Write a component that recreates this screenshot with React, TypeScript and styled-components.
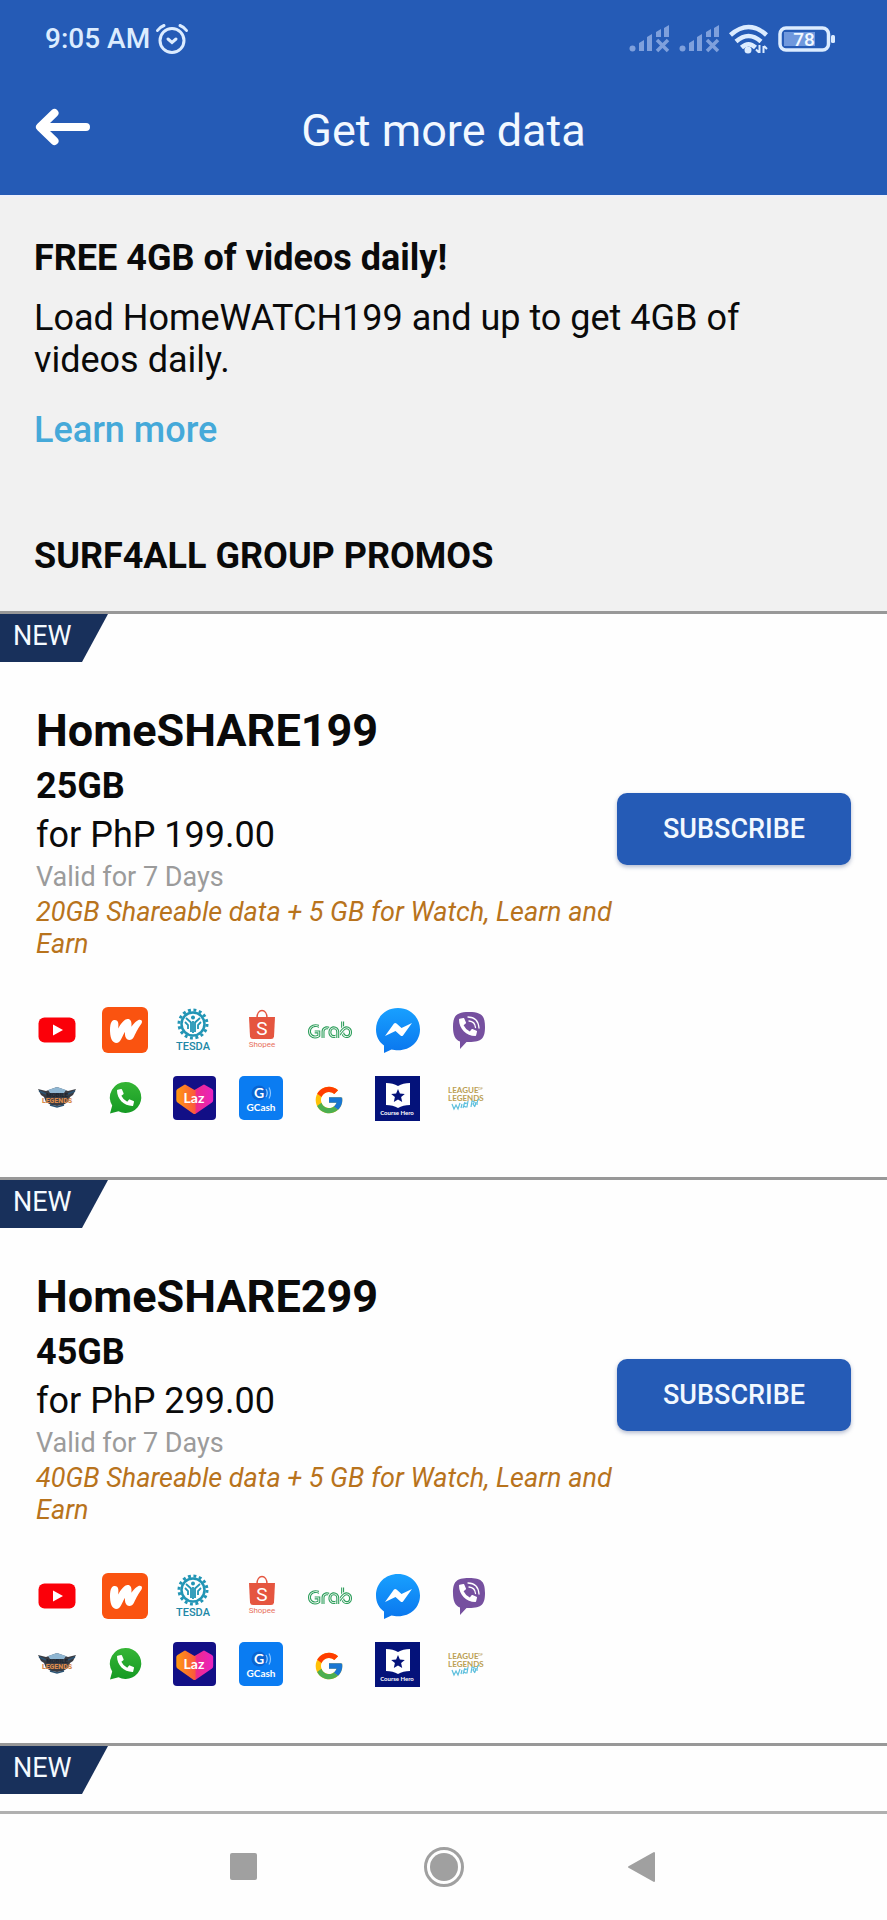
import React from 'react';
import styled, { createGlobalStyle } from 'styled-components';
import { SiWattpad, SiGrab } from 'react-icons/si';
import { FaPhoneAlt } from 'react-icons/fa';
import { FcGoogle } from 'react-icons/fc';

const GlobalStyle = createGlobalStyle`
  * { box-sizing: border-box; }
  html, body, #root { height: 100%; }
  body {
    margin: 0;
    background: #fefefe;
    color: #0a0a0a;
    font-family: Roboto, "Liberation Sans", sans-serif;
  }
`;

const Screen = styled.div`
  display: flex;
  flex-direction: column;
  height: 100vh;
  overflow: hidden;
`;

const TopBar = styled.header`
  flex: none;
  height: 195px;
  background: #255bb6;
  color: #f2f8ff;
`;

const StatusBar = styled.div`
  display: flex;
  align-items: center;
  justify-content: space-between;
  height: 78px;
  padding: 0 52px 0 45px;
`;

const StatusGroup = styled.div<{ $gap: number }>`
  display: flex;
  align-items: center;
  gap: ${(p) => p.$gap}px;
  color: #dcecff;
`;

const Clock = styled.span`
  font-size: 28px;
  line-height: 32px;
  font-weight: 500;
`;

const TitleRow = styled.div`
  display: grid;
  grid-template-columns: 56px 1fr 56px;
  align-items: center;
  height: 106px;
  padding: 0 35px;
`;

const BackButton = styled.button`
  display: flex;
  padding: 0 0 8px;
  border: 0;
  background: none;
  cursor: pointer;
`;

const Title = styled.h1`
  margin: 0;
  font-size: 45px;
  line-height: 54px;
  font-weight: 400;
  text-align: center;
`;

const Content = styled.main`
  flex: 1;
  min-height: 0;
  overflow: hidden;
`;

const Intro = styled.section`
  padding: 40px 34px 34px;
  border-top: 2px solid #eef0fb;
  background: #f1f1f1;
`;

const SectionHeading = styled.h2`
  margin: 0;
  font-size: 36px;
  line-height: 42px;
  font-weight: 700;
`;

const IntroText = styled.p`
  max-width: 740px;
  margin: 18px 0 28px;
  font-size: 36px;
  line-height: 42px;
`;

const LearnMore = styled.a`
  display: block;
  margin-bottom: 84px;
  font-size: 36px;
  line-height: 42px;
  font-weight: 500;
  color: #45a9d9;
  text-decoration: none;
`;

const Card = styled.article`
  height: 566px;
  border-top: 3px solid #989898;
  background: #fefefe;
`;

const Ribbon = styled.div`
  width: 108px;
  height: 48px;
  padding: 6px 13px;
  background: #18305b;
  clip-path: polygon(0 0, 100% 0, 82px 100%, 0 100%);
  color: #f4faff;
  font-size: 27px;
  line-height: 32px;
`;

const Offer = styled.div`
  display: flex;
  align-items: flex-start;
  justify-content: space-between;
  padding: 42px 36px 0;
`;

const Details = styled.div`
  flex: 0 1 580px;
`;

const PlanName = styled.h3`
  margin: 0;
  font-size: 45px;
  line-height: 54px;
  font-weight: 700;
`;

const PlanSize = styled.p`
  margin: 2px 0 0;
  font-size: 36px;
  line-height: 52px;
  font-weight: 700;
`;

const PlanPrice = styled.p`
  margin: 0;
  font-size: 36px;
  line-height: 46px;
`;

const PlanValidity = styled.p`
  margin: 0;
  font-size: 27px;
  line-height: 38px;
  color: #9b9b9b;
`;

const PlanNote = styled.p`
  margin: 0;
  font-size: 27px;
  line-height: 32px;
  font-style: italic;
  color: #b8731c;
`;

const SubscribeButton = styled.button`
  flex: none;
  width: 234px;
  height: 72px;
  margin-top: 89px;
  border: 0;
  border-radius: 10px;
  background: #255bb6;
  box-shadow: 0 2px 4px rgba(37, 60, 120, 0.35);
  color: #f2f8ff;
  font: 500 27px/32px Roboto, "Liberation Sans", sans-serif;
  cursor: pointer;
`;

const AppGrid = styled.ul`
  display: grid;
  grid-template-columns: repeat(7, 68px);
  grid-auto-rows: 68px;
  margin: 0;
  padding: 36px 0 0 23px;
  list-style: none;
`;

const AppCell = styled.li`
  display: flex;
  align-items: center;
  justify-content: center;
`;

const NavBar = styled.nav`
  flex: none;
  display: flex;
  align-items: center;
  justify-content: center;
  gap: 136px;
  height: 109px;
  border-top: 3px solid #b0b0b0;
  background: #fefefe;
`;

const NavButton = styled.button`
  display: flex;
  padding: 0;
  border: 0;
  background: none;
  cursor: pointer;
`;

const AlarmIcon = () => (
  <svg width="34" height="32" viewBox="0 0 34 32" fill="none" stroke="currentColor" strokeWidth="3" strokeLinecap="round">
    <circle cx="17" cy="17.500" r="12" />
    <path d="M13 16l4 3.500 4-3.500" />
    <path d="M2.500 7.500Q5 4 9 2.500M31.500 7.500Q29 4 25 2.500" />
  </svg>
);

const SignalIcon = () => (
  <svg width="41" height="28" viewBox="0 0 41 28" fill="#7fa0dc">
    <circle cx="3.500" cy="23.500" r="3" />
    <path d="M10 18l5-3v11h-5zM18 12l5-3v17h-5zM27 7l5-3v8h-5zM35 3l5-3v12h-5z" />
    <path d="M28 15l11 11M39 15l-11 11" stroke="#7fa0dc" strokeWidth="3.500" />
  </svg>
);

const WifiIcon = () => (
  <svg width="40" height="30" viewBox="0 0 40 30" fill="none" stroke="currentColor" strokeWidth="4.500">
    <path d="M1.500 11Q19.500-5 37.500 11M7 17.500Q19.500 6.500 32 17.500M12.500 23.500Q19.500 17 26.500 23.500" />
    <circle cx="19" cy="26" r="3.500" fill="currentColor" stroke="none" />
    <path d="M30.500 21v8M30 28.500l-3-3M34.500 29v-7M35 22l3 3" strokeWidth="2" />
  </svg>
);

const BatteryIcon = () => (
  <svg width="57" height="26" viewBox="0 0 57 26">
    <rect x="2" y="2" width="48.500" height="22" rx="6" fill="none" stroke="currentColor" strokeWidth="3.500" />
    <rect x="6" y="6" width="31" height="14" fill="#6f98dd" />
    <rect x="53" y="9" width="4" height="8" rx="1.500" fill="currentColor" />
    <text x="26" y="20" textAnchor="middle" fontSize="19" fontWeight="500" fill="#f2f8ff">78</text>
  </svg>
);

const BackArrow = () => (
  <svg width="56" height="38" viewBox="0 0 56 38" fill="none" stroke="#fff" strokeWidth="8" strokeLinecap="round" strokeLinejoin="round">
    <path d="M51 19H6M19.500 5L5 19l14.500 14" />
  </svg>
);

type LogoProps = { label: string; children: React.ReactNode };

const Logo = ({ label, children }: LogoProps) => (
  <svg width="56" height="56" viewBox="0 0 56 56" role="img" aria-label={label}>
    {children}
  </svg>
);

const YouTubeLogo = () => (
  <Logo label="YouTube">
    <rect x="9.500" y="15.500" width="37" height="25" rx="6" fill="#fb0009" />
    <path d="M24 22.500v11l10-5.500z" fill="#fff" />
  </Logo>
);

const WattpadLogo = () => (
  <Logo label="Wattpad">
    <rect x="5" y="5" width="46" height="46" rx="6" fill="#fa5310" />
    <SiWattpad x={13} y={13} size={32} color="#fff" />
  </Logo>
);

const TesdaLogo = () => (
  <Logo label="TESDA">
    <g fill="none" stroke="#2295b5">
      <circle cx="28" cy="22" r="14" strokeWidth="3" strokeDasharray="2.900 2.600" />
      <circle cx="28" cy="22" r="11.500" strokeWidth="2.500" />
      <path d="M28 19v12M21 16l5 4.500v9.500M35 16l-5 4.500v9.500M20 20l3 3v4M36 20l-3 3v4" strokeWidth="1.800" />
    </g>
    <circle cx="28" cy="15.500" r="2" fill="#2295b5" />
    <text x="28" y="48" textAnchor="middle" fontSize="11" fontWeight="500" fill="#2187a6">TESDA</text>
  </Logo>
);

const ShopeeLogo = () => (
  <Logo label="Shopee">
    <path d="M24 16C24 6 34 6 34 16" fill="none" stroke="#e5553f" strokeWidth="1.500" />
    <path d="M16 15h26l-1 19.500q-.3 2.500-3 2.500H20q-2.700 0-3-2.500z" fill="#e5553f" />
    <text x="29" y="33" textAnchor="middle" fontSize="19" fill="#fff">S</text>
    <text x="29" y="45" textAnchor="middle" fontSize="8" fill="#e8715f">Shopee</text>
  </Logo>
);

const GrabLogo = () => (
  <Logo label="Grab">
    <SiGrab x={7} y={6} size={44} color="#2f9f5c" />
  </Logo>
);

const MessengerLogo = () => (
  <Logo label="Messenger">
    <defs>
      <linearGradient id="messenger-blue" x1="0" y1="0" x2="0" y2="1">
        <stop offset="0" stopColor="#18a0ff" />
        <stop offset="1" stopColor="#0a76ee" />
      </linearGradient>
    </defs>
    <path d="M29 6C16 6 7 15.500 7 27.500c0 7 3 12.500 8 16V51l7.500-3.500c2 .5 4 .8 6.500.8 13 0 22-9.300 22-20.800S42 6 29 6z" fill="url(#messenger-blue)" />
    <path d="M16 34l9-12.500q1.200-1 2.500 0l5 4.500 10.500-5-9 12.500q-1.200 1-2.500 0L26.500 29z" fill="#fff" />
  </Logo>
);

const ViberLogo = () => (
  <Logo label="Viber">
    <path d="M32 10c-13 0-16 4-16 15 0 8 2 12.500 7 14.500V47l6.500-7H32c13 0 16-4 16-15s-3-15-16-15z" fill="#76509f" />
    <FaPhoneAlt x={22} y={16} size={18} color="#fff" />
    <path d="M31 15q10 0 11 11M32 19q6 .5 6.500 6.500" fill="none" stroke="#fff" strokeWidth="1.300" strokeLinecap="round" />
  </Logo>
);

const MobileLegendsLogo = () => (
  <Logo label="Mobile Legends">
    <path d="M9 19l8 2 11-4 11 4 8-2-3 6-3 2-2 5-5 3-6 1-6-1-5-3-2-5-3-2z" fill="#3a3b42" />
    <path d="M19 20l9-3 9 3-2 3H21z" fill="#8fb6d2" />
    <path d="M10 21l7 3M46 21l-7 3M21 35l7 2 7-2" stroke="#2c5474" strokeWidth="1.500" fill="none" />
    <text x="28" y="27" textAnchor="middle" fontSize="6" fontWeight="900" fill="#1d2733">MOBILE</text>
    <text x="28" y="33" textAnchor="middle" fontSize="7" fontWeight="900" fill="#d98a4c">LEGENDS</text>
  </Logo>
);

const WhatsAppLogo = () => (
  <Logo label="WhatsApp">
    <defs>
      <linearGradient id="whatsapp-green" x1="0" y1="0" x2="0" y2="1">
        <stop offset="0" stopColor="#35b535" />
        <stop offset="1" stopColor="#159a24" />
      </linearGradient>
    </defs>
    <path d="M28.500 12a15.500 15.500 0 1 1-7 29.200L13 43.500l2.200-8A15.500 15.500 0 0 1 28.500 12z" fill="url(#whatsapp-green)" />
    <FaPhoneAlt x={20} y={19} size={17} color="#fff" />
  </Logo>
);

const LazadaLogo = () => (
  <Logo label="Lazada">
    <defs>
      <linearGradient id="lazada-heart" x1="0" y1="0" x2="1" y2="0">
        <stop offset="0" stopColor="#ff9a10" />
        <stop offset="0.500" stopColor="#fb5a3c" />
        <stop offset="0.550" stopColor="#ee2a8c" />
        <stop offset="1" stopColor="#e822c0" />
      </linearGradient>
    </defs>
    <rect x="8" y="6" width="43" height="44" rx="4" fill="#120f86" />
    <path d="M19 15q1-.8 2 0l8.500 5 8.500-5q1-.8 2 0l7 4q1.200.8 1.200 2v9q0 1.500-1.200 2.500L31 43.500q-1.500 1-3 0L12.500 32.500q-1.200-1-1.200-2.500v-9q0-1.200 1.200-2z" fill="url(#lazada-heart)" />
    <text x="29" y="33" textAnchor="middle" fontSize="14" fontWeight="700" fontFamily="Lato, sans-serif" fill="#fff">Laz</text>
  </Logo>
);

const GCashLogo = () => (
  <Logo label="GCash">
    <rect x="6" y="6" width="44" height="44" rx="5" fill="#0a7cf2" />
    <circle cx="26" cy="23" r="7.500" fill="#0c63cf" />
    <text x="26" y="28" textAnchor="middle" fontSize="14" fontWeight="700" fontFamily="Lato, sans-serif" fill="#fff">G</text>
    <path d="M33 19q2.500 4 0 8M36 17.500q3 5.500 0 11" fill="none" stroke="#8ec6ff" strokeWidth="1.200" />
    <text x="28" y="41" textAnchor="middle" fontSize="10" fontWeight="700" fontFamily="Lato, sans-serif" fill="#fff">GCash</text>
  </Logo>
);

const GoogleLogo = () => (
  <Logo label="Google">
    <FcGoogle x={12} y={14} size={32} />
  </Logo>
);

const CourseHeroLogo = () => (
  <Logo label="Course Hero">
    <rect x="6" y="6" width="45" height="45" fill="#04127a" />
    <path d="M17 13q7 0 12 3 5-3 12-3v22q-7 0-12 3-5-3-12-3z" fill="#fff" />
    <path d="M29 19l1.900 4.500 4.900.4-3.700 3.200 1.100 4.800-4.200-2.500-4.200 2.500 1.100-4.800-3.700-3.200 4.900-.4z" fill="#04127a" />
    <text x="28" y="45" textAnchor="middle" fontSize="6" fontWeight="700" fontFamily="Lato, sans-serif" fill="#fff">Course Hero</text>
  </Logo>
);

const WildRiftLogo = () => (
  <Logo label="League of Legends Wild Rift">
    <g fontFamily="Lato, sans-serif" fontSize="8" fontWeight="700" fill="#bb9f52">
      <text x="11" y="23">LEAGUE</text>
      <text x="11" y="31">LEGENDS</text>
    </g>
    <text x="41" y="20" fontSize="4" fill="#bb9f52">OF</text>
    <path d="M15 34l2 5 2-4 2 4 2-6M25 34l-1 4M28 32l-2 6M31 31l-1 6q-4 0-3-3l3-1M34 37l1-6q4 0 1 3l2 3M39 32l-1 4M43 29q-3 0-3 6" fill="none" stroke="#5cbfdd" strokeWidth="1.200" />
  </Logo>
);

const APPS = [
  YouTubeLogo, WattpadLogo, TesdaLogo, ShopeeLogo, GrabLogo, MessengerLogo, ViberLogo,
  MobileLegendsLogo, WhatsAppLogo, LazadaLogo, GCashLogo, GoogleLogo, CourseHeroLogo, WildRiftLogo,
];

type Plan = { name: string; size: string; price: string; validity: string; note: string };

const PLANS: Plan[] = [
  {
    name: 'HomeSHARE199',
    size: '25GB',
    price: 'for PhP 199.00',
    validity: 'Valid for 7 Days',
    note: '20GB Shareable data + 5 GB for Watch, Learn and Earn',
  },
  {
    name: 'HomeSHARE299',
    size: '45GB',
    price: 'for PhP 299.00',
    validity: 'Valid for 7 Days',
    note: '40GB Shareable data + 5 GB for Watch, Learn and Earn',
  },
];

const PlanCard = ({ plan }: { plan: Plan }) => (
  <Card>
    <Ribbon>NEW</Ribbon>
    <Offer>
      <Details>
        <PlanName>{plan.name}</PlanName>
        <PlanSize>{plan.size}</PlanSize>
        <PlanPrice>{plan.price}</PlanPrice>
        <PlanValidity>{plan.validity}</PlanValidity>
        <PlanNote>{plan.note}</PlanNote>
      </Details>
      <SubscribeButton type="button">SUBSCRIBE</SubscribeButton>
    </Offer>
    <AppGrid>
      {APPS.map((AppLogo, i) => (
        <AppCell key={i}>
          <AppLogo />
        </AppCell>
      ))}
    </AppGrid>
  </Card>
);

export default function App() {
  return (
    <Screen>
      <GlobalStyle />
      <TopBar>
        <StatusBar>
          <StatusGroup $gap={5}>
            <Clock>9:05 AM</Clock>
            <AlarmIcon />
          </StatusGroup>
          <StatusGroup $gap={9}>
            <SignalIcon />
            <SignalIcon />
            <WifiIcon />
            <BatteryIcon />
          </StatusGroup>
        </StatusBar>
        <TitleRow>
          <BackButton type="button" aria-label="Back">
            <BackArrow />
          </BackButton>
          <Title>Get more data</Title>
        </TitleRow>
      </TopBar>
      <Content>
        <Intro>
          <SectionHeading>FREE 4GB of videos daily!</SectionHeading>
          <IntroText>Load HomeWATCH199 and up to get 4GB of videos daily.</IntroText>
          <LearnMore href="#learn-more">Learn more</LearnMore>
          <SectionHeading>SURF4ALL GROUP PROMOS</SectionHeading>
        </Intro>
        {PLANS.map((plan) => (
          <PlanCard key={plan.name} plan={plan} />
        ))}
        <Card>
          <Ribbon>NEW</Ribbon>
        </Card>
      </Content>
      <NavBar>
        <NavButton type="button" aria-label="Recent apps">
          <svg width="64" height="42" viewBox="0 0 64 42">
            <rect x="18" y="7" width="27" height="27" rx="2" fill="#a0a0a0" />
          </svg>
        </NavButton>
        <NavButton type="button" aria-label="Home">
          <svg width="64" height="42" viewBox="0 0 64 42">
            <circle cx="32" cy="21" r="18.500" fill="none" stroke="#a0a0a0" strokeWidth="3" />
            <circle cx="32" cy="21" r="14" fill="#a0a0a0" />
          </svg>
        </NavButton>
        <NavButton type="button" aria-label="Back to previous screen">
          <svg width="64" height="42" viewBox="0 0 64 42">
            <path d="M42 7v28L17 21z" fill="#a0a0a0" stroke="#a0a0a0" strokeWidth="2" strokeLinejoin="round" />
          </svg>
        </NavButton>
      </NavBar>
    </Screen>
  );
}
